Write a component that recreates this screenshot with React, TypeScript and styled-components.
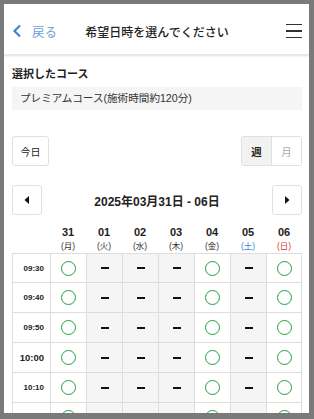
import React, { FC } from 'react';
import styled, { createGlobalStyle } from 'styled-components';

const GlobalStyle = createGlobalStyle`
  html, body {
    margin: 0;
    padding: 0;
    background: #7a7a7a;
  }
  body {
    font-family: 'Liberation Sans', 'Noto Sans CJK JP', sans-serif;
    color: #222;
  }
`;

const Frame = styled.div`
  width: 314px;
  height: 419px;
  box-sizing: border-box;
  padding: 4px 5px 6px 4px;
  background: #7a7a7a;
`;

const Screen = styled.div`
  width: 100%;
  height: 100%;
  background: #fff;
  overflow: hidden;
`;

const Header = styled.header`
  height: 51px;
  display: grid;
  grid-template-columns: 70px 1fr 70px;
  align-items: center;
  padding: 0 7px 0 8px;
  box-shadow: 0 1px 2px rgba(0, 0, 0, 0.12);
  border-bottom: 1px solid #e8e8e8;
  box-sizing: border-box;
`;

const BackLink = styled.a`
  display: flex;
  align-items: center;
  gap: 10px;
  color: #6c9fd6;
  font-size: 12.5px;
  padding-top: 4px;
`;

const Title = styled.h1`
  margin: 0;
  text-align: center;
  font-size: 12px;
  font-weight: 500;
  color: #222;
  padding-top: 4px;
`;

const MenuButton = styled.div`
  justify-self: end;
  display: flex;
  flex-direction: column;
  gap: 5px;
  width: 16px;
  padding-top: 4px;
  span {
    display: block;
    height: 1.3px;
    background: #333;
  }
`;

const Body = styled.main`
  padding: 0 7px 0 8px;
`;

const SectionLabel = styled.div`
  margin-top: 11px;
  font-size: 11px;
  font-weight: bold;
  line-height: 16px;
  color: #222;
`;

const CourseBox = styled.div`
  margin-top: 5px;
  height: 23px;
  line-height: 23px;
  background: #f5f5f5;
  padding: 0 8px;
  font-size: 10.6px;
  color: #333;
`;

const Toolbar = styled.div`
  margin-top: 26px;
  display: flex;
  justify-content: space-between;
`;

const Button = styled.button<{ width?: number; active?: boolean }>`
  width: ${({ width }) => width || 37}px;
  height: 30px;
  padding: 0;
  border: 1px solid #e0e0e0;
  border-radius: 3px;
  background: ${({ active }) => (active ? '#f2f2f2' : '#fff')};
  font-family: inherit;
  font-size: 10px;
  color: #222;
  display: flex;
  align-items: center;
  justify-content: center;
`;

const Toggle = styled.div`
  display: flex;
  border: 1px solid #e0e0e0;
  border-radius: 3px;
  overflow: hidden;
`;

const ToggleItem = styled.div<{ active?: boolean }>`
  width: 29px;
  height: 28px;
  display: flex;
  align-items: center;
  justify-content: center;
  font-size: 10.5px;
  font-weight: ${({ active }) => (active ? 'bold' : 'normal')};
  color: ${({ active }) => (active ? '#222' : '#aaa')};
  background: ${({ active }) => (active ? '#f2f2f2' : '#fff')};
  & + & {
    border-left: 1px solid #e0e0e0;
  }
`;

const Nav = styled.div`
  margin-top: 19px;
  display: flex;
  align-items: center;
  justify-content: space-between;
`;

const RangeText = styled.div`
  font-size: 12px;
  font-weight: bold;
  color: #222;
`;

const Table = styled.div`
  display: grid;
  grid-template-columns: 38px repeat(7, 36px);
`;

const DayHead = styled.div`
  height: 38px;
  display: flex;
  flex-direction: column;
  align-items: center;
  justify-content: flex-start;
  padding-top: 10px;
  box-sizing: border-box;
`;

const DayNum = styled.div`
  font-size: 11px;
  font-weight: bold;
  line-height: 14px;
  color: #222;
`;

const DayName = styled.div<{ tone?: string }>`
  font-size: 8.5px;
  line-height: 12px;
  margin-top: 1px;
  color: ${({ tone }) => tone || '#333'};
`;

const TimeCell = styled.div<{ big?: boolean; first?: boolean }>`
  height: 30px;
  box-sizing: border-box;
  border-left: 1px solid #ddd;
  border-bottom: 1px solid #ddd;
  border-top: ${({ first }) => (first ? '1px solid #ddd' : 'none')};
  display: flex;
  align-items: center;
  justify-content: flex-end;
  padding-right: 6px;
  font-size: ${({ big }) => (big ? '9.5px' : '8px')};
  font-weight: bold;
  color: #222;
`;

const SlotCell = styled.div<{ closed?: boolean; first?: boolean; last?: boolean }>`
  height: 30px;
  box-sizing: border-box;
  border-left: 1px solid #ddd;
  border-bottom: 1px solid #ddd;
  border-top: ${({ first }) => (first ? '1px solid #ddd' : 'none')};
  border-right: ${({ last }) => (last ? '1px solid #ddd' : 'none')};
  background: ${({ closed }) => (closed ? '#f5f5f5' : '#fff')};
  display: flex;
  align-items: center;
  justify-content: center;
`;

const Circle = styled.span`
  width: 15px;
  height: 15px;
  box-sizing: border-box;
  border: 1.6px solid #22a03e;
  border-radius: 50%;
`;

const Dash = styled.span`
  width: 8px;
  height: 2px;
  background: #111;
`;

const Chevron: FC = () => (
  <svg width="10" height="14" viewBox="0 0 10 14">
    <path d="M8 1.5 L2.5 7 L8 12.5" fill="none" stroke="#3f86cf" strokeWidth="2.2" />
  </svg>
);

const Triangle: FC<{ dir: 'left' | 'right' }> = ({ dir }) => (
  <svg width="6" height="8" viewBox="0 0 6 8">
    {dir === 'left' ? <path d="M5 0 L0.5 4 L5 8 Z" fill="#111" /> : <path d="M1 0 L5.5 4 L1 8 Z" fill="#111" />}
  </svg>
);

const days = [
  { num: '31', name: '(月)' },
  { num: '01', name: '(火)' },
  { num: '02', name: '(水)' },
  { num: '03', name: '(木)' },
  { num: '04', name: '(金)' },
  { num: '05', name: '(土)', tone: '#3a86d4' },
  { num: '06', name: '(日)', tone: '#d63a3a' },
];

const open = [true, false, false, false, true, false, true];
const times = ['09:30', '09:40', '09:50', '10:00', '10:10', '10:20'];

const App: FC = () => (
  <>
    <GlobalStyle />
    <Frame>
      <Screen>
        <Header>
          <BackLink>
            <Chevron />
            戻る
          </BackLink>
          <Title>希望日時を選んでください</Title>
          <MenuButton>
            <span />
            <span />
            <span />
          </MenuButton>
        </Header>
        <Body>
          <SectionLabel>選択したコース</SectionLabel>
          <CourseBox>プレミアムコース(施術時間約120分)</CourseBox>
          <Toolbar>
            <Button>今日</Button>
            <Toggle>
              <ToggleItem active>週</ToggleItem>
              <ToggleItem>月</ToggleItem>
            </Toggle>
          </Toolbar>
          <Nav>
            <Button width={30}>
              <Triangle dir="left" />
            </Button>
            <RangeText>2025年03月31日 - 06日</RangeText>
            <Button width={30}>
              <Triangle dir="right" />
            </Button>
          </Nav>
          <Table>
            <DayHead />
            {days.map((d) => (
              <DayHead key={d.num}>
                <DayNum>{d.num}</DayNum>
                <DayName tone={d.tone}>{d.name}</DayName>
              </DayHead>
            ))}
            {times.map((t, r) => (
              <React.Fragment key={t}>
                <TimeCell first={r === 0} big={t === '10:00'}>
                  {t}
                </TimeCell>
                {open.map((o, i) => (
                  <SlotCell key={i} closed={!o} first={r === 0} last={i === 6}>
                    {o ? <Circle /> : <Dash />}
                  </SlotCell>
                ))}
              </React.Fragment>
            ))}
          </Table>
        </Body>
      </Screen>
    </Frame>
  </>
);

export default App;
